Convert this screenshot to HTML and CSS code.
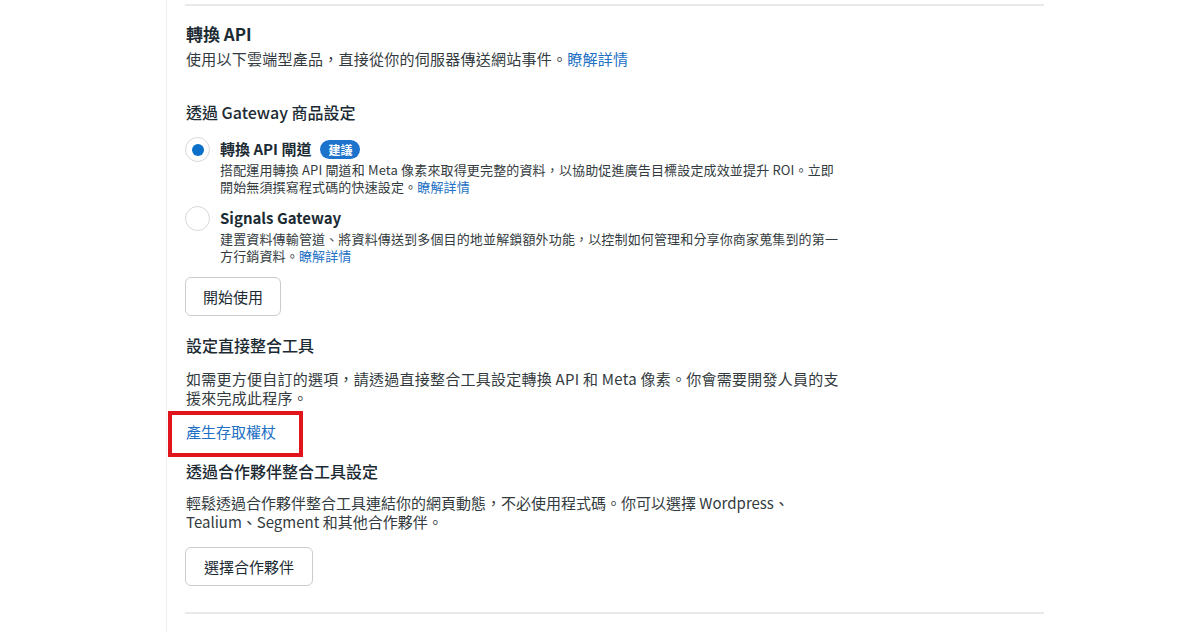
FILE: index.html
```html
<!DOCTYPE html>
<html lang="zh-Hant">
<head>
<meta charset="utf-8">
<title>轉換 API</title>
<link rel="stylesheet" href="styles.css">
</head>
<body>
<div class="page">
  <div class="panel">
    <div class="divider top"></div>

    <h2 class="title">轉換 API</h2>
    <p class="subtitle">使用以下雲端型產品，直接從你的伺服器傳送網站事件。<a class="link" href="#">瞭解詳情</a></p>

    <h3 class="heading gw">透過 Gateway 商品設定</h3>

    <div class="options">
      <div class="option first">
        <span class="radio checked"><span class="dot"></span></span>
        <div class="option-body">
          <div class="option-label">轉換 API 閘道 <span class="badge">建議</span></div>
          <p class="option-desc">搭配運用轉換 API 閘道和 Meta 像素來取得更完整的資料，以協助促進廣告目標設定成效並提升 ROI。立即開始無須撰寫程式碼的快速設定。<a class="link" href="#">瞭解詳情</a></p>
        </div>
      </div>
      <div class="option second">
        <span class="radio"></span>
        <div class="option-body">
          <div class="option-label">Signals Gateway</div>
          <p class="option-desc">建置資料傳輸管道、將資料傳送到多個目的地並解鎖額外功能，以控制如何管理和分享你商家蒐集到的第一方行銷資料。<a class="link" href="#">瞭解詳情</a></p>
        </div>
      </div>
    </div>

    <button class="btn start">開始使用</button>

    <h3 class="heading direct">設定直接整合工具</h3>
    <p class="body-text">如需更方便自訂的選項，請透過直接整合工具設定轉換 API 和 Meta 像素。你會需要開發人員的支援來完成此程序。</p>

    <div class="highlight">
      <a class="link token" href="#">產生存取權杖</a>
    </div>

    <h3 class="heading partner">透過合作夥伴整合工具設定</h3>
    <p class="body-text partner-text">輕鬆透過合作夥伴整合工具連結你的網頁動態，不必使用程式碼。你可以選擇 Wordpress、Tealium、Segment 和其他合作夥伴。</p>

    <button class="btn choose">選擇合作夥伴</button>

    <div class="divider bottom"></div>
  </div>
</div>
</body>
</html>
```

FILE: styles.css
```css
* { box-sizing: border-box; }

html, body {
  margin: 0;
  padding: 0;
  background: #ffffff;
}

body {
  font-family: "Noto Sans CJK TC", "Noto Sans", sans-serif;
  color: #1c2b33;
  width: 1200px;
  height: 632px;
  overflow: hidden;
}

.page {
  margin-left: 166px;
  height: 632px;
  border-left: 1px solid #efefef;
  padding-left: 18px;
}

.panel {
  width: 859px;
  display: flex;
  flex-direction: column;
  align-items: flex-start;
}

.divider {
  width: 100%;
  height: 2px;
  background: #e9eaeb;
}

.divider.top { margin-top: 4px; }
.divider.bottom { margin-top: 26px; }

p, h2, h3 { margin: 0; }

.title {
  margin-top: 17px;
  font-size: 17px;
  line-height: 22px;
  font-weight: 700;
  color: #1c2b33;
  padding-left: 1px;
}

.subtitle {
  margin-top: 4px;
  font-size: 15px;
  line-height: 20px;
  color: #333b40;
  padding-left: 1px;
  letter-spacing: 0.25px;
}

.link {
  color: #2170c4;
  text-decoration: none;
}

.heading {
  font-size: 16px;
  line-height: 22px;
  font-weight: 500;
  color: #1c2b33;
  padding-left: 1px;
}

.heading.gw { margin-top: 32px; }
.heading.direct { margin-top: 18px; }
.heading.partner { margin-top: 3px; }

.options {
  display: flex;
  flex-direction: column;
  margin-top: 16px;
}

.option {
  display: flex;
  gap: 10px;
  align-items: flex-start;
}

.option.second { margin-top: 13px; }

.radio {
  flex: none;
  width: 25px;
  height: 25px;
  border-radius: 50%;
  border: 1px solid #d6d9dc;
  background: #fff;
  margin-top: -2px;
  display: flex;
  align-items: center;
  justify-content: center;
}

.radio .dot {
  width: 12px;
  height: 12px;
  border-radius: 50%;
  background: #0a6fc9;
}

.option-body {
  width: 620px;
}

.option-label {
  font-size: 15px;
  line-height: 20px;
  font-weight: 700;
  color: #1c2b33;
  display: flex;
  align-items: center;
  gap: 9px;
}

.badge {
  display: inline-block;
  background: #1d72cc;
  color: #fff;
  font-size: 12px;
  font-weight: 700;
  line-height: 19px;
  padding: 0 8px;
  border-radius: 10px;
}

.option-desc {
  margin-top: 2px;
  font-size: 13px;
  line-height: 17px;
  color: #333b40;
  letter-spacing: 0.15px;
}

.btn {
  font-family: inherit;
  background: #fff;
  border: 1px solid #c9ccd0;
  border-radius: 6px;
  color: #1c2b33;
  font-size: 15px;
  line-height: 20px;
  padding: 9px 0;
  height: 39px;
  cursor: pointer;
}

.btn.start { margin-top: 13px; width: 96px; }
.btn.choose { margin-top: 16px; width: 128px; }

.body-text {
  margin-top: 13px;
  width: 656px;
  font-size: 15px;
  line-height: 19px;
  color: #333b40;
  padding-left: 1px;
  letter-spacing: 0.25px;
}

.partner-text {
  margin-top: 11px;
  width: 640px;
  letter-spacing: 0;
}

.highlight {
  margin-top: 4px;
  margin-left: -17px;
  width: 135px;
  height: 46px;
  border: 4px solid #e0141b;
  padding: 7px 0 0 14px;
}

.token {
  display: block;
  font-size: 15px;
  line-height: 20px;
}
```
